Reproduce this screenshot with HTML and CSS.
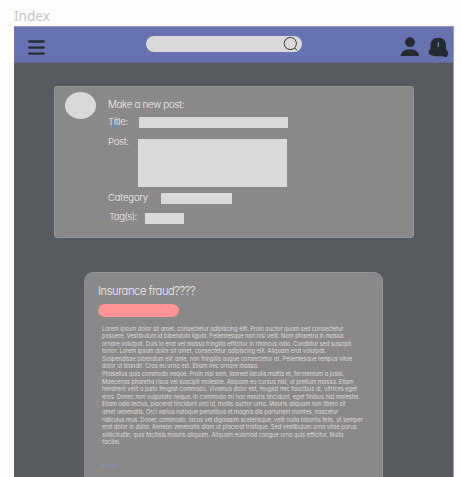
FILE: index.html
```html
<!DOCTYPE html>
<html lang="en">
<head>
<meta charset="utf-8">
<title>Index</title>
<link rel="stylesheet" href="styles.css">
</head>
<body>
<div class="frame-label">Index</div>
<div class="frame">
  <header class="topbar">
    <svg class="menu" width="19" height="16" viewBox="0 0 19 16"><path d="M2.200 1.500H16.800M2.200 7.600H16.800M2.200 13.600H16.800"/></svg>
    <div class="search">
      <svg width="16" height="16" viewBox="0 0 16 16"><circle cx="7.3" cy="7.5" r="6.1"/><path d="M11.8 12L14 14.3"/></svg>
    </div>
    <svg class="user" width="20" height="20" viewBox="0 0 20 20"><circle cx="10" cy="5.2" r="4.9"/><path d="M.8 19C1 14.6 4.6 12.2 10 12.2S18.800 14.600 19 19Z"/></svg>
    <svg class="bell" width="21" height="21" viewBox="0 0 21 21"><path d="M2.500 9C2.500 3.500 5.500 .8 10.300 .8S18 3.500 18 9V12L20.200 15.500Q20.600 17.500 19.600 18.500Q19.200 20.200 17.300 20Q16 20 15.300 19.200H6.500L2 17.800Q.2 17 .8 14.200Q1.300 12.500 2.500 11.500Z"/><path class="slot" d="M10.300 5.300V9.800"/></svg>
  </header>
  <main>
    <section class="composer">
      <div class="avatar"></div>
      <form class="fields">
        <h2>Make a new post:</h2>
        <div class="row title"><label>Title:</label><div class="box"></div></div>
        <div class="row post"><label>Post:</label><div class="box"></div></div>
        <div class="row category"><label>Category</label><div class="box"></div></div>
        <div class="row tags"><label>Tag(s):</label><div class="box"></div></div>
      </form>
    </section>
    <article class="entry">
      <h1>Insurance fraud????</h1>
      <div class="pill"></div>
      <p>Lorem ipsum dolor sit amet, consectetur adipiscing elit. Proin auctor quam sed consectetur<br>
posuere. Vestibulum id bibendum ligula. Pellentesque non nisi velit. Nam pharetra in massa<br>
ornare volutpat. Duis in erat vel massa fringilla efficitur in rhoncus odio. Curabitur sed suscipit<br>
tortor. Lorem ipsum dolor sit amet, consectetur adipiscing elit. Aliquam erat volutpat.<br>
Suspendisse bibendum elit ante, non fringilla augue consectetur at. Pellentesque tempus vitae<br>
dolor ut blandit. Cras eu urna est. Etiam nec ornare massa.<br>
Phasellus quis commodo neque. Proin nisl sem, laoreet iaculis mattis et, fermentum a justo.<br>
Maecenas pharetra risus vel suscipit molestie. Aliquam eu cursus nisl, ut pretium massa. Etiam<br>
hendrerit velit a justo feugiat commodo. Vivamus dolor est, feugiat nec faucibus at, ultrices eget<br>
eros. Donec non vulputate neque. In commodo mi non mauris tincidunt, eget finibus nisl molestie.<br>
Etiam odio lectus, placerat tincidunt orci id, mollis auctor urna. Mauris aliquam non libero sit<br>
amet venenatis. Orci varius natoque penatibus et magnis dis parturient montes, nascetur<br>
ridiculus mus. Donec commodo, lacus vel dignissim scelerisque, velit nulla lobortis felis, ut semper<br>
erat dolor in dolor. Aenean venenatis diam ut placerat tristique. Sed vestibulum urna vitae purus<br>
sollicitudin, quis facilisis mauris aliquam. Aliquam euismod congue urna quis efficitur. Nulla<br>
facilisi.</p>
      <a class="more">more</a>
    </article>
  </main>
</div>
</body>
</html>
```
FILE: styles.css
```css
* { box-sizing: border-box; }
body {
  margin: 0;
  height: 477px;
  overflow: hidden;
  background: #fdfdfd;
  font-family: Inter, Lato, sans-serif;
  font-feature-settings: "cv11" 1;
  color: #eee;
}
.frame-label {
  height: 26px;
  padding: 7px 0 0 14px;
  font: 13.6px/17px "Noto Sans", sans-serif;
  color: #c6c6c6;
}
.frame {
  width: 440px;
  height: 451px;
  margin-left: 14px;
  background: #575b60;
  border-right: 1px solid #9c9da2;
  overflow: hidden;
}
.topbar {
  display: flex;
  align-items: flex-start;
  height: 37px;
  background: #6972b0;
  border-top: 1px solid #8d93c2;
  border-bottom: 1px solid #626a93;
}
svg { display: block; flex: none; }
.menu { margin: 13px 0 0 13px; fill: none; stroke: #242c3b; stroke-width: 2.3; stroke-linecap: round; }
.search {
  display: flex;
  justify-content: flex-end;
  width: 156px;
  height: 16px;
  margin: 9px 0 0 100px;
  padding-right: 3px;
  border-radius: 8px;
  background: #d9d9d9;
}
.search svg { fill: none; stroke: #30343c; stroke-width: 1; }
.user { margin: 10px 0 0 98px; fill: #242b32; }
.bell { margin: 10px 0 0 8px; fill: #242b32; }
.slot { stroke: #7d86b8; stroke-width: 1.3; }
.composer {
  display: flex;
  width: 360px;
  height: 152px;
  margin: 23px 0 0 40px;
  padding: 5px 0 0 10px;
  border: 1px solid #929695;
  border-radius: 3px;
  background: #8a8888;
}
.avatar { width: 31px; height: 27px; border-radius: 50%; background: #d9d9d9; }
.fields { margin-left: 12px; font-size: 9.6px; line-height: 12px; font-weight: 300; letter-spacing: -0.3px; }
h2 { margin: 6px 0 0; font-size: 9.9px; line-height: 12px; font-weight: 300; letter-spacing: -0.36px; white-space: nowrap; }
.row { display: flex; align-items: flex-start; }
.box { background: #d9d9d9; }
.title { margin-top: 6px; height: 20px; }
.title label { width: 31px; }
.title .box { width: 148.500px; height: 11px; margin-top: 1px; }
.post { height: 56px; }
.post label { width: 30px; }
.post .box { width: 149px; height: 48px; margin-top: 3px; }
.category { height: 19px; }
.category label { width: 53px; letter-spacing: -0.2px; }
.category .box { width: 71px; height: 11px; margin-top: 1px; }
.tags label { width: 36px; margin-left: 1px; letter-spacing: -0.5px; }
.tags .box { width: 39px; height: 11px; margin-top: 2px; }
.entry {
  width: 299px;
  height: 230px;
  margin: 34px 0 0 70px;
  padding: 10px 0 0 13px;
  border: 1px solid #979798;
  border-left-color: #898888;
  border-radius: 9px 9px 0 0;
  background: #8a8888;
}
h1 { margin: 0; font-size: 11.2px; line-height: 16px; font-weight: 300; letter-spacing: -0.42px; }
.pill { width: 81px; height: 13px; margin-top: 5px; border-radius: 7px; background: #ff9494; }
.entry p { margin: 8.5px 0 0 4px; font-size: 5.6px; line-height: 7.6px; white-space: nowrap; color: #dedede; }
.more { display: block; margin: 15px 0 0 4px; font-size: 6px; line-height: 7px; color: #8f90bd; }
```
